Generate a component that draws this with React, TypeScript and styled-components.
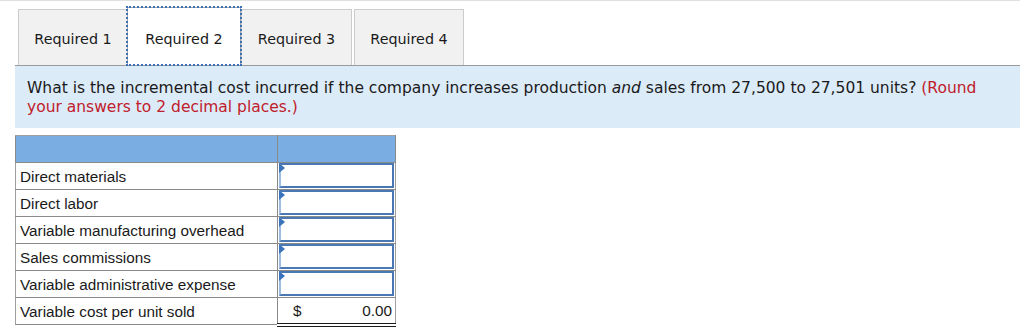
import React, { FC } from 'react'
import styled, { createGlobalStyle } from 'styled-components'

const GlobalStyle = createGlobalStyle`
    html, body {
        margin: 0;
        padding: 0;
        background: #ffffff;
    }
    body {
        font-family: "DejaVu Sans", Verdana, sans-serif;
        color: #1a1a1a;
    }
`

const Page = styled.div`
    width: 1024px;
    height: 328px;
    overflow: hidden;
`
const TopRule = styled.div`
    width: 1020px;
    height: 1px;
    background: #e0e0e0;
`
const TabBar = styled.div`
    display: flex;
    align-items: flex-end;
    padding: 6px 0 0 18px;
`
interface TabProps {
    active?: boolean
    width: number
    gapLeft?: number
}
const Tab = styled.div<TabProps>`
    box-sizing: border-box;
    width: ${(p) => p.width}px;
    height: ${(p) => (p.active ? 58 : 56)}px;
    margin-left: ${(p) => p.gapLeft || 0}px;
    display: flex;
    align-items: center;
    justify-content: center;
    padding-top: ${(p) => (p.active ? 4 : 2)}px;
    font-size: 14.3px;
    color: #1a1a1a;
    background: ${(p) => (p.active ? '#ffffff' : '#f1f1f1')};
    border: 1px solid ${(p) => (p.active ? '#a8a8a8' : '#cccccc')};
    border-bottom: none;
    outline: ${(p) => (p.active ? '2px dotted #3a70b8' : 'none')};
    outline-offset: -1px;
    position: relative;
    z-index: ${(p) => (p.active ? 1 : 0)};
`
const QuestionPanel = styled.div`
    margin-left: 15px;
    width: 1005px;
    box-sizing: border-box;
    background: #dcebf8;
    border-top: 1px solid #9a9a9a;
    padding: 13px 40px 11px 12px;
    font-size: 15.5px;
    line-height: 19px;
    color: #1a1a1a;
`
const Emph = styled.em`
    font-style: italic;
`
const Hint = styled.span`
    color: #c0202c;
`
const SheetTable = styled.table`
    margin: 7px 0 0 15px;
    border-collapse: collapse;
    border: 1px solid #a0a0a0;
    font-family: "Liberation Sans", Arial, sans-serif;
    font-size: 15.3px;
    color: #1a1a1a;
`
const HeadCell = styled.th`
    height: 26px;
    padding: 0;
    background: #7aade1;
    border: 1px solid #8a8a8a;
    border-top: 1px solid #a0a0a0;
`
const LabelCell = styled.td`
    box-sizing: border-box;
    width: 262px;
    height: 27px;
    padding: 2px 4px 0 4px;
    border: 1px solid #8a8a8a;
    border-left: 1px solid #a0a0a0;
    white-space: nowrap;
`
const ValueCell = styled.td`
    box-sizing: border-box;
    width: 118px;
    height: 27px;
    padding: 0 1px 1px 1px;
    border: 1px solid #8a8a8a;
    border-right: 1px solid #a0a0a0;
    vertical-align: bottom;
`
const InputBox = styled.div`
    position: relative;
    box-sizing: border-box;
    height: 25px;
    background: #ffffff;
    border: 2px solid #4a78b2;
    border-left: 2px solid #9ebde3;
`
const Marker = styled.span`
    position: absolute;
    left: -2px;
    top: -2px;
    width: 0;
    height: 0;
    border-top: 5px solid transparent;
    border-bottom: 5px solid transparent;
    border-left: 6px solid #3b74ba;
`
const TotalCell = styled.td`
    box-sizing: border-box;
    width: 118px;
    height: 27px;
    padding: 2px 3px 0 15px;
    border: 1px solid #8a8a8a;
    border-right: 1px solid #a0a0a0;
    border-bottom: 4px double #1a1a1a;
`
const TotalInner = styled.div`
    display: flex;
    justify-content: space-between;
`

const rows = [
    'Direct materials',
    'Direct labor',
    'Variable manufacturing overhead',
    'Sales commissions',
    'Variable administrative expense',
]

const tabs = [
    { label: 'Required 1', width: 110 },
    { label: 'Required 2', width: 114, active: true, gapLeft: -1 },
    { label: 'Required 3', width: 111, gapLeft: 0 },
    { label: 'Required 4', width: 110, gapLeft: 2 },
]

const App: FC = () => {
    return (
        <Page>
            <GlobalStyle />
            <TopRule />
            <TabBar>
                {tabs.map((t) => (
                    <Tab key={t.label} width={t.width} active={t.active} gapLeft={t.gapLeft}>
                        {t.label}
                    </Tab>
                ))}
            </TabBar>
            <QuestionPanel>
                What is the incremental cost incurred if the company increases production <Emph>and</Emph> sales
                from 27,500 to 27,501 units? <Hint>(Round your answers to 2 decimal places.)</Hint>
            </QuestionPanel>
            <SheetTable>
                <thead>
                    <tr>
                        <HeadCell />
                        <HeadCell />
                    </tr>
                </thead>
                <tbody>
                    {rows.map((r) => (
                        <tr key={r}>
                            <LabelCell>{r}</LabelCell>
                            <ValueCell>
                                <InputBox>
                                    <Marker />
                                </InputBox>
                            </ValueCell>
                        </tr>
                    ))}
                    <tr>
                        <LabelCell>Variable cost per unit sold</LabelCell>
                        <TotalCell>
                            <TotalInner>
                                <span>$</span>
                                <span>0.00</span>
                            </TotalInner>
                        </TotalCell>
                    </tr>
                </tbody>
            </SheetTable>
        </Page>
    )
}
export default App
